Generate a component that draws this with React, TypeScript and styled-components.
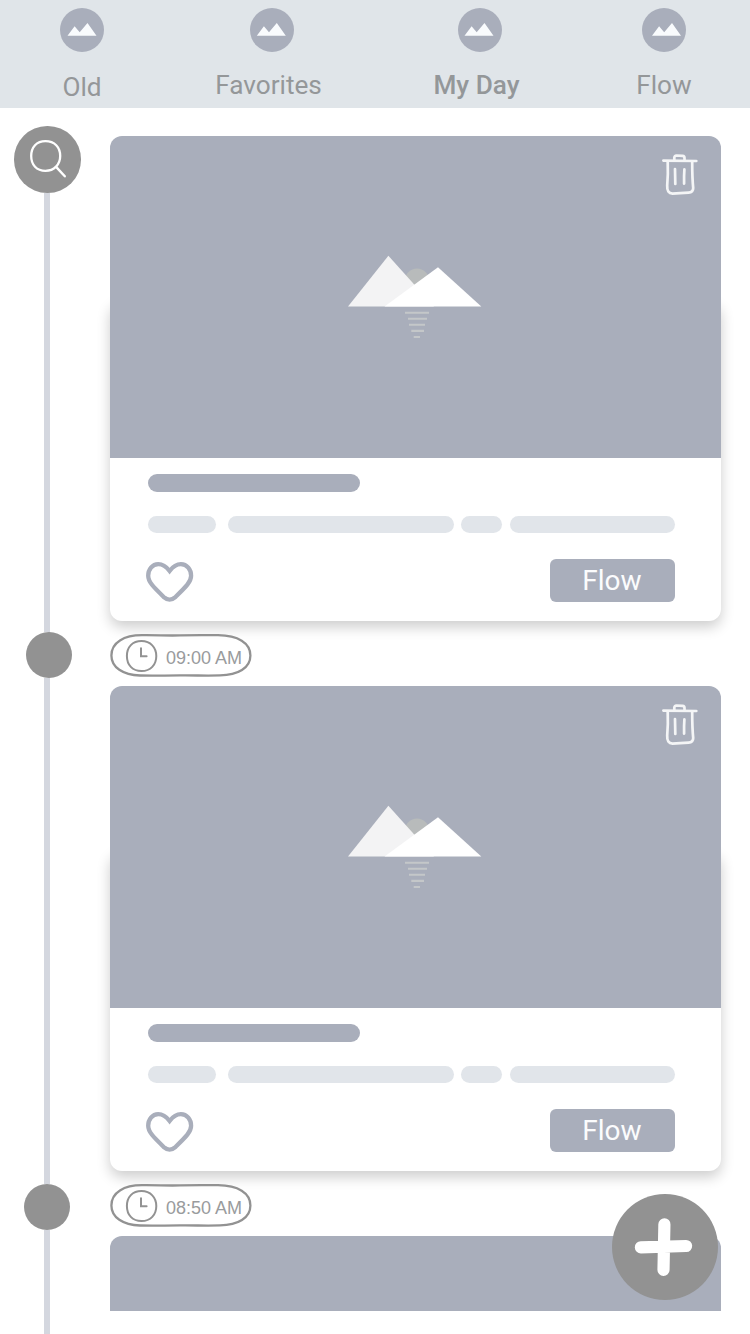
import React from "react";
import styled, { createGlobalStyle } from "styled-components";

const slate = "#a9aebb";
const gray = "#929292";
const mist = "#e1e5ea";

const GlobalStyle = createGlobalStyle`
  * { box-sizing: border-box; }
  body { margin: 0; background: #fff; font-family: Roboto, "Liberation Sans", sans-serif; }
`;

const Screen = styled.div`
  width: 750px;
  height: 1334px;
  display: flex;
  flex-direction: column;
  overflow: hidden;
  background: #fff;
`;

const TabBar = styled.nav`
  flex: none;
  height: 108px;
  display: grid;
  grid-template-columns: 164px 216px 200px 168px;
  background: #e0e5e9;
`;

const Tab = styled.div`
  display: flex;
  flex-direction: column;
  align-items: center;
  padding-top: 8px;
`;

const TabLabel = styled.span<{ $active?: boolean; $dx?: number; $dy?: number }>`
  margin-top: ${(p) => 18 + (p.$dy ?? 0)}px;
  margin-left: ${(p) => p.$dx ?? 0}px;
  font-size: 26.2px;
  line-height: 30px;
  font-weight: ${(p) => (p.$active ? 500 : 400)};
  color: #949799;
  white-space: nowrap;
`;

const Main = styled.main`
  flex: 1;
  min-height: 0;
  display: flex;
`;

const Rail = styled.aside`
  width: 110px;
  display: flex;
  flex-direction: column;
  padding-top: 18px;
`;

const SearchButton = styled.div`
  flex: none;
  width: 66.5px;
  height: 66.5px;
  margin-left: 14px;
  border-radius: 50%;
  background: ${gray};
`;

const Dot = styled.div<{ $left: number }>`
  flex: none;
  width: 46px;
  height: 46px;
  margin-left: ${(p) => p.$left}px;
  border-radius: 50%;
  background: ${gray};
`;

const Track = styled.div<{ $length: number }>`
  flex: none;
  width: 6px;
  height: ${(p) => p.$length}px;
  margin-left: 44px;
  background: #d4d7df;
`;

const Feed = styled.section`
  width: 611.4px;
  display: flex;
  flex-direction: column;
  padding-top: 28px;
`;

const Entry = styled.article`
  flex: none;
  height: 550px;
`;

const Card = styled.div`
  position: relative;
  isolation: isolate;
  height: 485.3px;
  border-radius: 12px;
  &::before {
    content: "";
    position: absolute;
    z-index: -1;
    inset: 164px 0 0;
    border-radius: 12px;
    background: #fff;
    box-shadow: 0 6px 14px rgba(0, 0, 0, 0.2);
  }
`;

const Media = styled.div<{ $height?: number }>`
  height: ${(p) => p.$height ?? 322.3}px;
  display: grid;
  grid-template-columns: 1fr auto;
  padding: 18px 23.4px 0 238px;
  border-radius: 12px 12px 0 0;
  background: ${slate};
`;

const Scenery = styled.svg`
  display: block;
  margin-top: 101px;
`;

const CardBody = styled.div`
  padding: 15.7px 46px 0 38px;
`;

const TitleBar = styled.div`
  width: 212px;
  height: 17.7px;
  border-radius: 9px;
  background: ${slate};
`;

const Chips = styled.div`
  display: flex;
  margin-top: 24px;
`;

const Chip = styled.div<{ $width: number; $gap?: number }>`
  width: ${(p) => p.$width}px;
  height: 17.5px;
  margin-right: ${(p) => p.$gap ?? 0}px;
  border-radius: 9px;
  background: ${mist};
`;

const Actions = styled.div`
  display: flex;
  justify-content: space-between;
  margin: 26px 0 0 -2px;
`;

const HeartIcon = styled.svg`
  display: block;
  margin-top: 2.8px;
`;

const FlowButton = styled.div`
  width: 125px;
  height: 43px;
  border-radius: 6px;
  background: ${slate};
  color: #fbfcfd;
  font-size: 28px;
  line-height: 43px;
  text-align: center;
  padding-right: 2px;
`;

const TimePill = styled.div`
  position: relative;
  width: 142px;
  height: 43px;
  margin-top: 12.7px;
  padding-left: 56px;
  font: 18px/48px "Liberation Sans", Arial, sans-serif;
  color: #999b9d;
  white-space: nowrap;
`;

const PillOutline = styled.svg`
  position: absolute;
  inset: 0;
`;

const AddButton = styled.div`
  position: fixed;
  left: 612px;
  top: 1194px;
  width: 106px;
  height: 106px;
  border-radius: 50%;
  background: ${gray};
`;

function TabIcon({ shift = 0 }: { shift?: number }) {
  return (
    <svg width="44" height="44" viewBox="0 0 44 44">
      <circle cx="22" cy="22" r="22" fill={slate} />
      <path
        transform={`translate(${shift} 0)`}
        d="M7.5 27.8 14.6 18.2 19.7 24.3 27.5 15 36.5 27.8Z"
        fill="#f9fbfd"
      />
    </svg>
  );
}

function Trash() {
  return (
    <svg width="36" height="42" viewBox="0 0 36 42" fill="none" stroke="#f4f5f6" strokeWidth="2.7" strokeLinecap="round" strokeLinejoin="round">
      <path d="M1.4 6.6 34.3 7" />
      <path d="M12.3 6.5V3.6Q12.5 1.6 14.4 1.5L20.6 1.8Q22.5 2 22.5 4V6.5" />
      <path d="M5.7 7.5Q6.2 20 5.2 31.5Q4.8 39.6 10.5 39.6Q18 39.2 26.5 38.6Q31.3 38.2 31.2 34Q30.2 24 30.2 8" />
      <path d="M13 15 13.3 30M22.4 15.4Q21.9 22 22.1 29.6" />
    </svg>
  );
}

function Mountains() {
  return (
    <Scenery width="134" height="84" viewBox="18 15 134 84">
      <circle cx="87" cy="40.5" r="12" fill="#b8bbbb" />
      <path d="M18 66.6 58.4 15.8 104 66.6Z" fill="#f3f3f4" />
      <path d="M54.5 66.6 108 27.2 151.3 66.6Z" fill="#fff" />
      <path d="M75 72.7H99M78 78.8H97M79 84.8H95M81.3 90.9H94M83.7 97H90" stroke="#c4c7c9" strokeWidth="2.1" />
    </Scenery>
  );
}

function Time({ children }: { children: string }) {
  return (
    <TimePill>
      <PillOutline width="142" height="43" viewBox="0 0 142 43" fill="none" stroke={gray}>
        <path
          d="M1.4 21.5C1.4 8.5 14 1.2 32 1.2C48 1 56 1.8 70 1.4C86 1 92 1.2 108 1.2C128 1.4 140.4 9 140.4 21.5C140.4 34 128 41.2 110 41.4C94 41.9 86 41.2 70 41.4C54 41.4 46 41.9 30 41.5C13 41 1.4 33.5 1.4 21.5Z"
          strokeWidth="2.3"
        />
        <path d="M31.5 7.1C40.5 7.1 46.3 13.5 46.3 22C46.3 31 40.5 37.1 31.5 37.1C22.5 37.1 16.9 31 16.9 22C16.9 13 22.5 7.1 31.5 7.1Z" strokeWidth="2" />
        <path d="M31 14.2V22.3H36.6" strokeWidth="2" strokeLinecap="round" />
      </PillOutline>
      {children}
    </TimePill>
  );
}

function FlowEntry({ time }: { time: string }) {
  return (
    <Entry>
      <Card>
        <Media>
          <Mountains />
          <Trash />
        </Media>
        <CardBody>
          <TitleBar />
          <Chips>
            <Chip $width={68.4} $gap={11.3} />
            <Chip $width={226.2} $gap={7.2} />
            <Chip $width={41} $gap={8} />
            <Chip $width={164.5} />
          </Chips>
          <Actions>
            <HeartIcon width="48" height="40" viewBox="0 0 48 40" fill="none" stroke={slate} strokeWidth="4.3">
              <path d="M23.6 9C20.5 5 16.8 2.2 12.3 2.2C6.2 2.2 2.2 7.6 2.2 13.7C2.2 20 7.5 25 18.2 35.4Q20.8 37.7 23.6 37.7Q26.4 37.7 29 35.4C39.7 25 45.1 20 45.1 13.7C45.1 7.6 41 2.2 34.9 2.2C30.4 2.2 26.7 5 23.6 9Z" />
            </HeartIcon>
            <FlowButton>Flow</FlowButton>
          </Actions>
        </CardBody>
      </Card>
      <Time>{time}</Time>
    </Entry>
  );
}

export default function App() {
  return (
    <Screen>
      <GlobalStyle />
      <TabBar>
        <Tab>
          <TabIcon />
          <TabLabel $dy={2}>Old</TabLabel>
        </Tab>
        <Tab>
          <TabIcon shift={-0.7} />
          <TabLabel $dx={-7}>Favorites</TabLabel>
        </Tab>
        <Tab>
          <TabIcon shift={-1} />
          <TabLabel $active $dx={-7}>My Day</TabLabel>
        </Tab>
        <Tab>
          <TabIcon shift={2.5} />
          <TabLabel>Flow</TabLabel>
        </Tab>
      </TabBar>
      <Main>
        <Rail>
          <SearchButton>
            <svg width="66" height="66" viewBox="0 0 66 66" fill="none" stroke="#fff" strokeLinecap="round">
              <path d="M31.5 15.2C40.5 15.2 46.2 21.2 46.2 30C46.2 38.6 40 44.8 31.5 44.8C22.6 44.8 17.2 38.8 17.2 30C17.2 21 22.6 15.2 31.5 15.2Z" strokeWidth="2.3" />
              <path d="M42.3 41.1 50.8 50.3" strokeWidth="2.4" />
            </svg>
          </SearchButton>
          <Track $length={439.5} />
          <Dot $left={26} />
          <Track $length={506} />
          <Dot $left={24} />
          <Track $length={104} />
        </Rail>
        <Feed>
          <FlowEntry time="09:00 AM" />
          <FlowEntry time="08:50 AM" />
          <Media $height={75.3} />
        </Feed>
      </Main>
      <AddButton>
        <svg width="106" height="106" viewBox="0 0 106 106" stroke="#fff" strokeWidth="12.2" strokeLinecap="round">
          <path d="M28.9 53.3 74.1 52M52.4 30.3 51.5 75.8" />
        </svg>
      </AddButton>
    </Screen>
  );
}
